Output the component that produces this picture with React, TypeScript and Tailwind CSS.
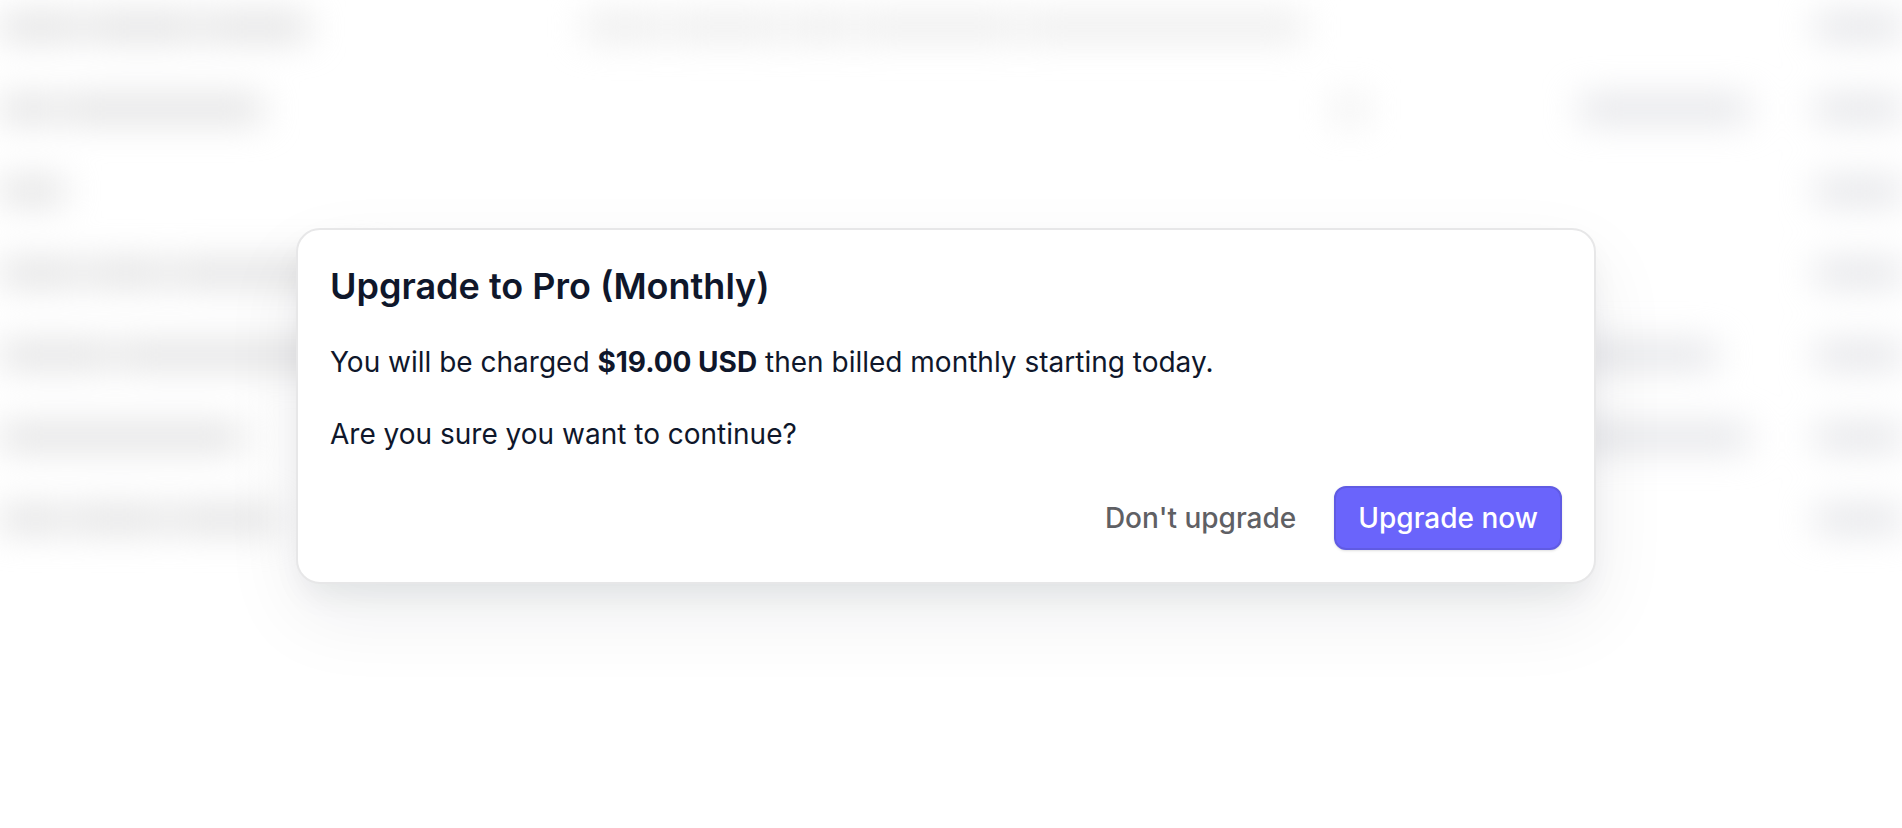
type Cell = { col: string; tone: string; words: string[] };

const INK = 'bg-[#d7d7d8]';
const SLATE = 'bg-[#dadbe0]';
const FAINT = 'bg-[#e6e6e6]';

const rows: Cell[][] = [
  [
    { col: 'col-start-1', tone: INK, words: ['w-20', 'w-28', 'w-[104px]'] },
    { col: 'col-start-2', tone: FAINT, words: ['w-20', 'w-28', 'w-16', 'w-40', 'w-[280px]'] },
    { col: 'col-start-5', tone: SLATE, words: ['w-full'] },
  ],
  [
    { col: 'col-start-1', tone: INK, words: ['w-14', 'w-[200px]'] },
    { col: 'col-start-3', tone: FAINT, words: ['w-7'] },
    { col: 'col-start-4', tone: SLATE, words: ['w-[168px]'] },
    { col: 'col-start-5', tone: SLATE, words: ['w-full'] },
  ],
  [
    { col: 'col-start-1', tone: INK, words: ['w-16'] },
    { col: 'col-start-5', tone: SLATE, words: ['w-full'] },
  ],
  [
    { col: 'col-start-1', tone: INK, words: ['w-20', 'w-20', 'w-[200px]'] },
    { col: 'col-start-5', tone: SLATE, words: ['w-full'] },
  ],
  [
    { col: 'col-start-1', tone: INK, words: ['w-28', 'w-[280px]'] },
    { col: 'col-start-4', tone: SLATE, words: ['w-[136px]'] },
    { col: 'col-start-5', tone: SLATE, words: ['w-full'] },
  ],
  [
    { col: 'col-start-1', tone: INK, words: ['w-[242px]'] },
    { col: 'col-start-4', tone: SLATE, words: ['w-[168px]'] },
    { col: 'col-start-5', tone: SLATE, words: ['w-full'] },
  ],
  [
    { col: 'col-start-1', tone: INK, words: ['w-16', 'w-24', 'w-[104px]'] },
    { col: 'col-start-5', tone: SLATE, words: ['w-full'] },
  ],
];

function BlurredTable() {
  return (
    <div aria-hidden="true" className="absolute inset-0 overflow-hidden">
      <div className="-mt-3.5 blur-[18px]">
        {rows.map((cells, i) => (
          <div
            key={i}
            className="grid h-[82px] grid-cols-[584px_752px_244px_236px_1fr] items-center"
          >
            {cells.map((cell) => (
              <div key={cell.col} className={`row-start-1 flex gap-1.5 ${cell.col}`}>
                {cell.words.map((width, j) => (
                  <div key={j} className={`h-5 ${cell.tone} ${width}`} />
                ))}
              </div>
            ))}
          </div>
        ))}
      </div>
    </div>
  );
}

export default function App() {
  return (
    <div className="relative min-h-screen bg-white font-['Inter',sans-serif]">
      <BlurredTable />
      <div className="relative flex justify-center pt-[228px] pr-2.5">
        <div
          role="dialog"
          aria-modal="true"
          aria-labelledby="upgrade-title"
          className="flex w-full max-w-[1300px] flex-col gap-8 rounded-3xl border-2 border-[#e7e7e8] bg-white p-8 text-[28px] leading-10 text-slate-900 shadow-[0_32px_80px_rgba(15,23,42,0.07),0_16px_32px_-8px_rgba(15,23,42,0.08)]"
        >
          <h2 id="upgrade-title" className="text-4xl leading-12 font-semibold">
            Upgrade to Pro (Monthly)
          </h2>
          <p>
            You will be charged <strong className="font-bold">$19.00 USD</strong> then billed monthly
            starting today.
          </p>
          <p>Are you sure you want to continue?</p>
          <div className="flex justify-end gap-4">
            <button type="button" className="h-16 rounded-xl px-[22px] font-medium text-[#5f6064]">
              Don't upgrade
            </button>
            <button
              type="button"
              className="h-16 rounded-xl border-2 border-[#605be3] bg-[#6a64fb] px-[22px] font-medium text-white shadow-sm"
            >
              Upgrade now
            </button>
          </div>
        </div>
      </div>
    </div>
  );
}
